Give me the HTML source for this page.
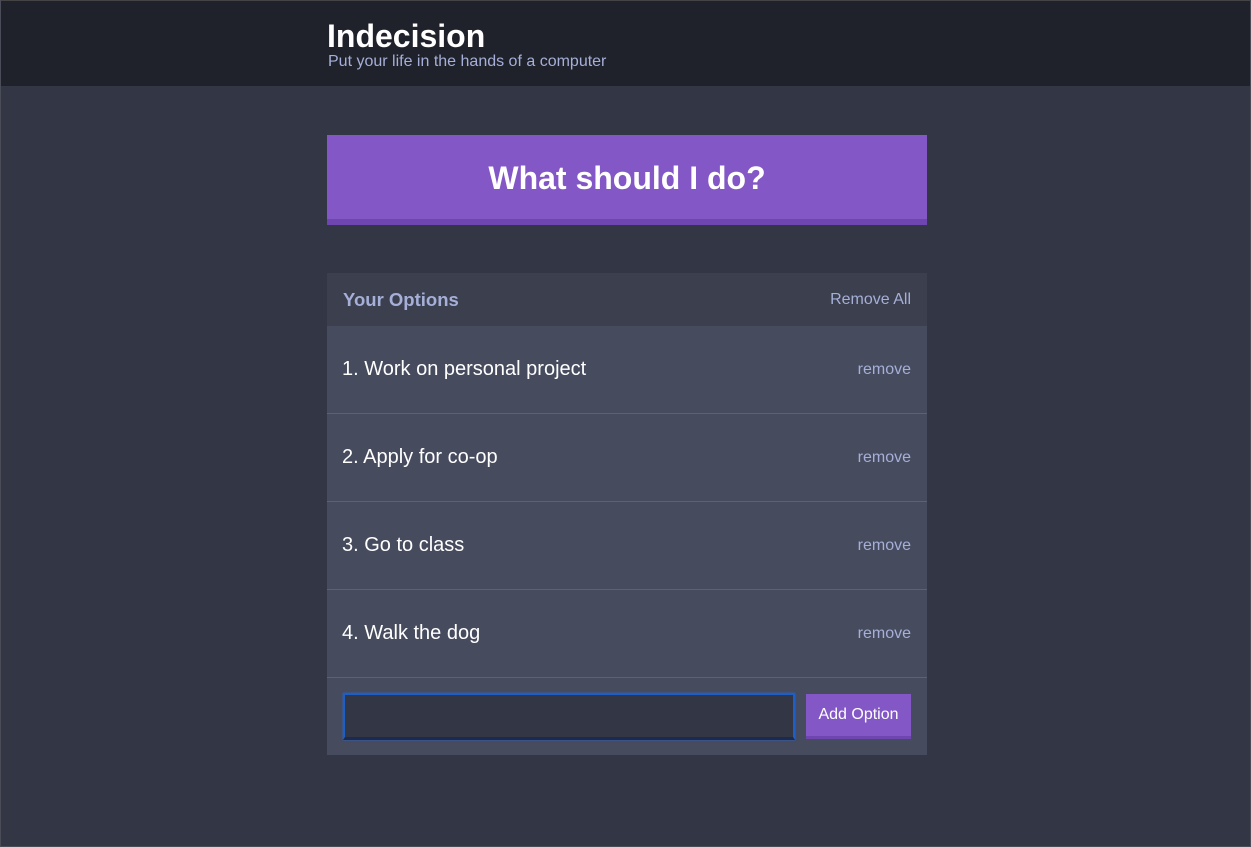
<!DOCTYPE html>
<html><head><style>
*{margin:0;padding:0;box-sizing:border-box}
body{width:1251px;height:847px;background:#333745;font-family:"Liberation Sans",Arial,sans-serif;overflow:hidden;border:1px solid #4a4d58;border-top:none}
.hd{height:86px;background:#20222b;border-top:1px solid #444;position:relative}
.hd h1{position:absolute;left:326px;top:17px;color:#fff;font-size:32px;font-weight:bold;letter-spacing:0}
.hd p{position:absolute;left:327px;top:52px;color:#a5afd7;font-size:16px}
.big{position:absolute;left:327px;top:135px;width:600px;height:90px;background:#8357c5;border-bottom:6px solid #6f46b0;color:#fff;font-size:32px;font-weight:bold;text-align:center;line-height:86px}
.box{position:absolute;left:327px;top:273px;width:600px;height:482px;background:#464b5e}
.bh{height:53px;background:#3c3f4e;display:flex;justify-content:space-between;align-items:center;padding:0 16px}
.bh b{color:#a5afd7;font-size:18.5px}
.bh span{color:#a5afd7;font-size:16px}
.it{height:88px;border-bottom:1px solid #5d6175;display:flex;justify-content:space-between;align-items:center;padding:0 16px 0 15px}
.it b{font-weight:normal;color:#fff;font-size:20px}
.it span{color:#a5afd7;font-size:16px}
.in{position:absolute;left:16px;top:420px;width:452px;height:47px;background:#333745;border:2px solid #1d5fc4;box-shadow:0 0 2px #2a6ad4;border-bottom:3px solid #1a2a50}
.ab{position:absolute;left:479px;top:421px;width:105px;height:45px;background:#8357c5;border-bottom:3px solid #6f46b0;color:#fff;font-size:16px;text-align:center;line-height:42px}
</style></head><body>
<div class="hd"><h1>Indecision</h1><p>Put your life in the hands of a computer</p></div>
<div class="big">What should I do?</div>
<div class="box">
<div class="bh"><b>Your Options</b><span>Remove All</span></div>
<div class="it"><b>1. Work on personal project</b><span>remove</span></div>
<div class="it"><b>2. Apply for co-op</b><span>remove</span></div>
<div class="it"><b>3. Go to class</b><span>remove</span></div>
<div class="it"><b>4. Walk the dog</b><span>remove</span></div>
<div class="in"></div><div class="ab">Add Option</div>
</div>
</body></html>
